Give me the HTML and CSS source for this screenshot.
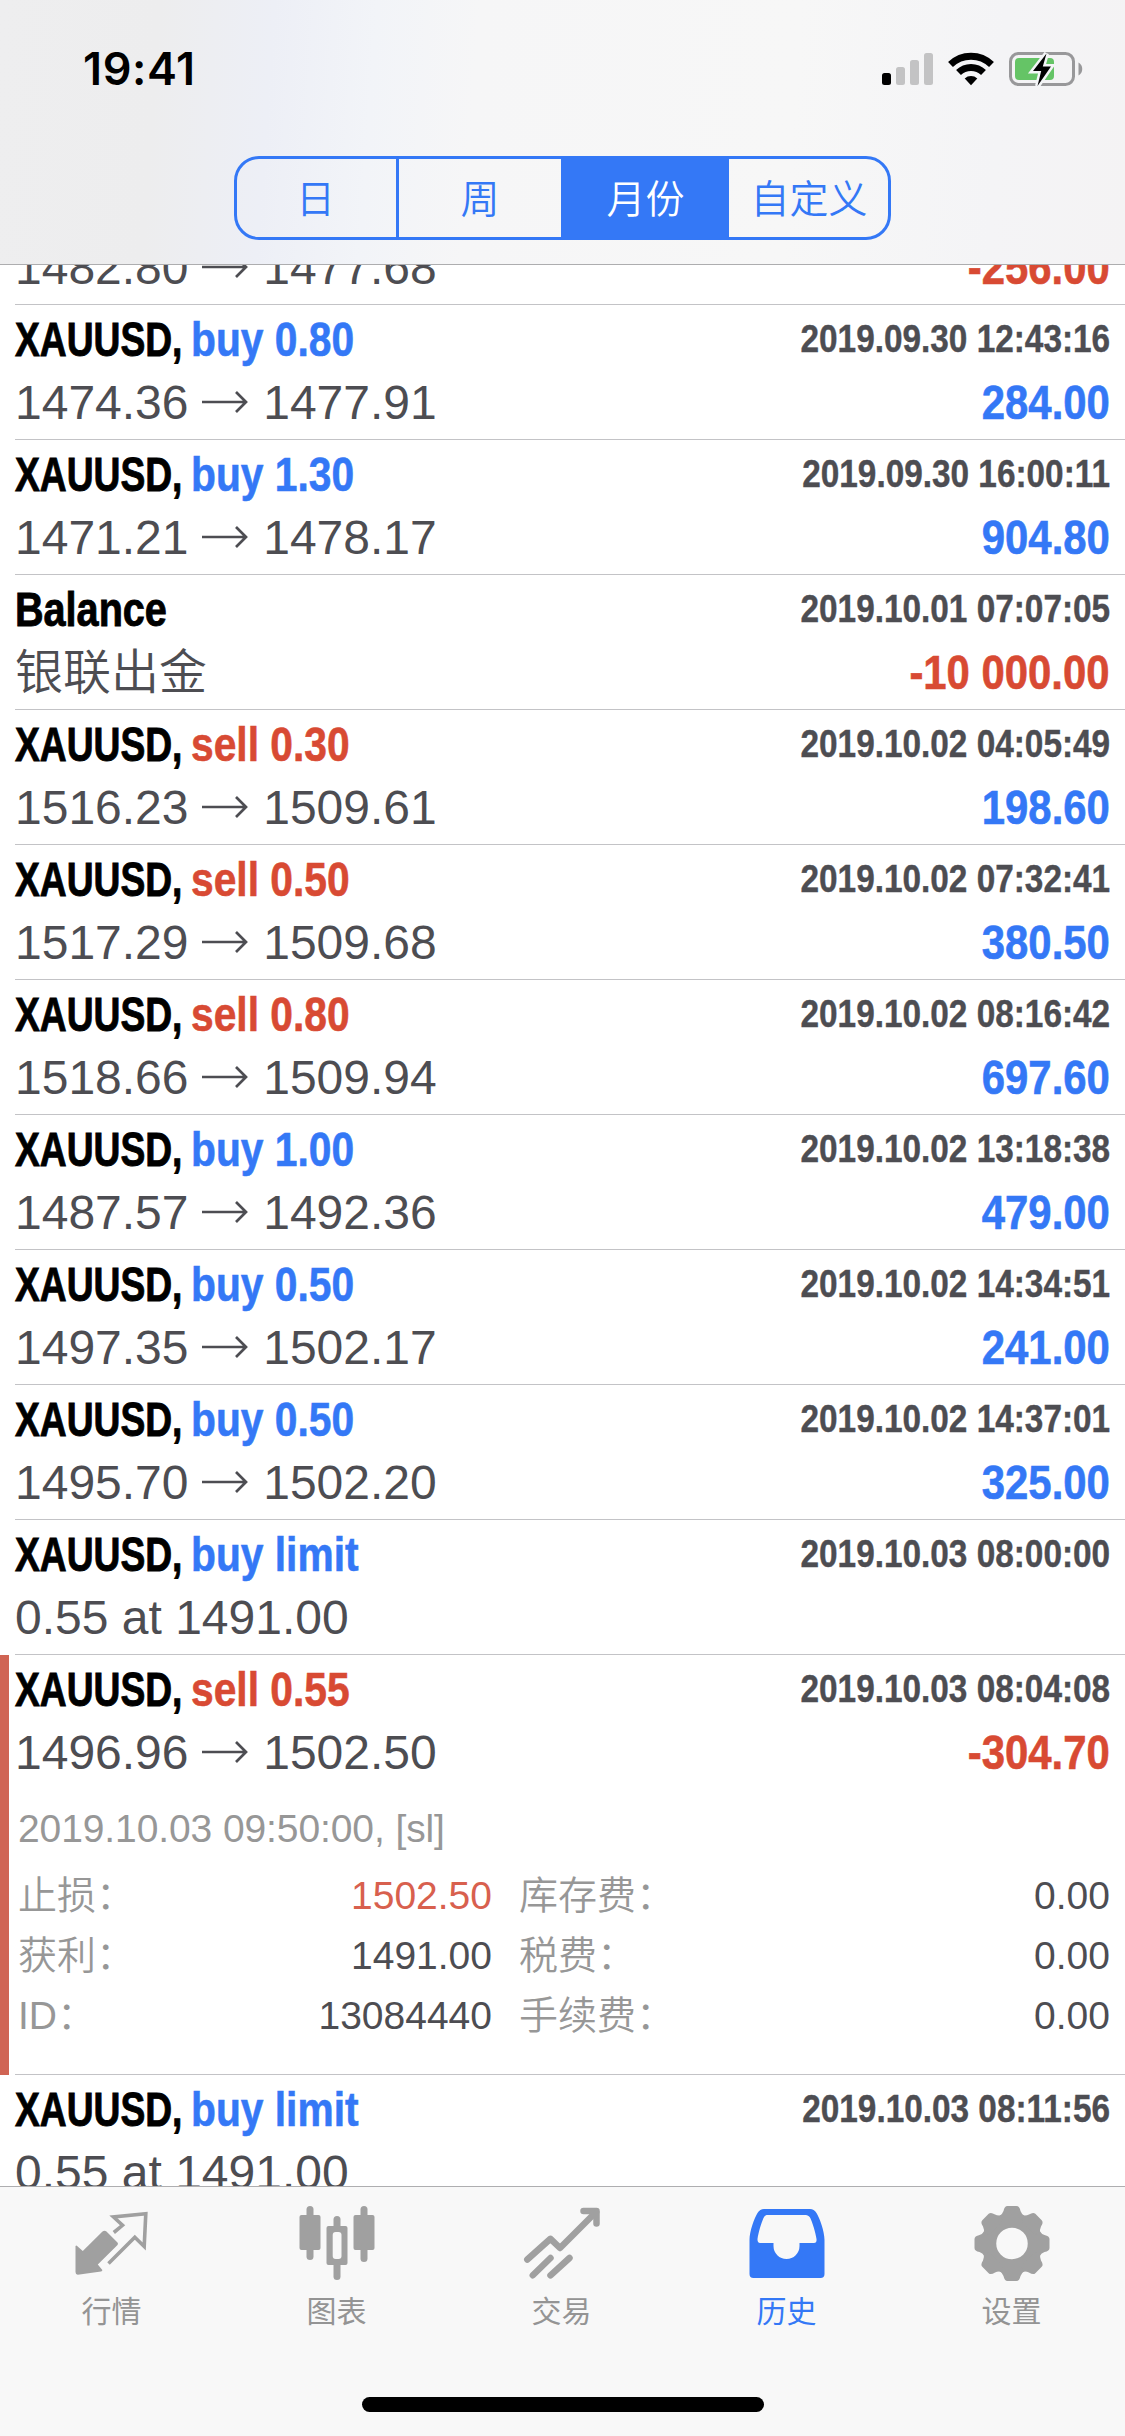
FILE: index.html
```html
<!DOCTYPE html>
<html lang="zh-CN">
<head>
<meta charset="utf-8">
<title>历史</title>
<link rel="stylesheet" href="styles.css">
</head>
<body>
<div class="screen">
  <header class="header">
    <div class="status">
      <span class="clock">19:41</span>
      <svg class="status-icons" width="202" height="38" viewBox="882 50 202 38">
        <rect x="882" y="73" width="9" height="12" rx="2.5"/>
        <g fill="#c3c3c4"><rect x="896" y="67" width="9" height="18" rx="2.5"/><rect x="910" y="60" width="9" height="25" rx="2.5"/><rect x="924" y="53" width="9" height="32" rx="2.5"/></g>
        <g fill="none" stroke="#000" stroke-width="7"><path d="M950.5 64.5a29.5 29.5 0 0 1 41 0"/><path d="M958.5 72.5a18 18 0 0 1 25 0"/></g>
        <path d="M971 85.2l-6.3-6.6a9.2 9.2 0 0 1 12.6 0z"/>
        <rect x="1010.5" y="53.5" width="63" height="31" rx="8" fill="none" stroke="#98989a" stroke-width="3"/>
        <path d="M1078.500 62.500c5 2.500 5 10.500 0 13z" fill="#98989a"/>
        <rect x="1015" y="58" width="39" height="22" rx="4" fill="#65c466"/>
        <path d="M1046.500 53.500L1033 71h8.200L1037.500 86 1051 66.500h-8.200z" stroke="#f4f5f7" stroke-width="5" stroke-linejoin="miter"/>
        <path d="M1046.500 53.500L1033 71h8.200L1037.500 86 1051 66.500h-8.200z"/>
      </svg>
    </div>
    <nav class="segments">
      <span class="segment">日</span><span class="segment">周</span><span class="segment selected">月份</span><span class="segment">自定义</span>
    </nav>
  </header>

  <main class="viewport">
    <div class="list">
      <div class="row"><span class="title"><b>XAUUSD,</b><em class="buy">buy 0.80</em></span><span class="time">2019.09.30 12:40:02</span><span class="price">1482.80 <svg class="arrow" viewBox="0 0 48 24"><path d="M0 12H44M34 2l10 10-10 10"/></svg> 1477.68</span><span class="profit loss">-256.00</span></div>
      <div class="row"><span class="title"><b>XAUUSD,</b><em class="buy">buy 0.80</em></span><span class="time">2019.09.30 12:43:16</span><span class="price">1474.36 <svg class="arrow" viewBox="0 0 48 24"><path d="M0 12H44M34 2l10 10-10 10"/></svg> 1477.91</span><span class="profit">284.00</span></div>
      <div class="row"><span class="title"><b>XAUUSD,</b><em class="buy">buy 1.30</em></span><span class="time">2019.09.30 16:00:11</span><span class="price">1471.21 <svg class="arrow" viewBox="0 0 48 24"><path d="M0 12H44M34 2l10 10-10 10"/></svg> 1478.17</span><span class="profit">904.80</span></div>
      <div class="row"><span class="title"><b class="word">Balance</b></span><span class="time">2019.10.01 07:07:05</span><span class="price">银联出金</span><span class="profit loss">-10 000.00</span></div>
      <div class="row"><span class="title"><b>XAUUSD,</b><em class="sell">sell 0.30</em></span><span class="time">2019.10.02 04:05:49</span><span class="price">1516.23 <svg class="arrow" viewBox="0 0 48 24"><path d="M0 12H44M34 2l10 10-10 10"/></svg> 1509.61</span><span class="profit">198.60</span></div>
      <div class="row"><span class="title"><b>XAUUSD,</b><em class="sell">sell 0.50</em></span><span class="time">2019.10.02 07:32:41</span><span class="price">1517.29 <svg class="arrow" viewBox="0 0 48 24"><path d="M0 12H44M34 2l10 10-10 10"/></svg> 1509.68</span><span class="profit">380.50</span></div>
      <div class="row"><span class="title"><b>XAUUSD,</b><em class="sell">sell 0.80</em></span><span class="time">2019.10.02 08:16:42</span><span class="price">1518.66 <svg class="arrow" viewBox="0 0 48 24"><path d="M0 12H44M34 2l10 10-10 10"/></svg> 1509.94</span><span class="profit">697.60</span></div>
      <div class="row"><span class="title"><b>XAUUSD,</b><em class="buy">buy 1.00</em></span><span class="time">2019.10.02 13:18:38</span><span class="price">1487.57 <svg class="arrow" viewBox="0 0 48 24"><path d="M0 12H44M34 2l10 10-10 10"/></svg> 1492.36</span><span class="profit">479.00</span></div>
      <div class="row"><span class="title"><b>XAUUSD,</b><em class="buy">buy 0.50</em></span><span class="time">2019.10.02 14:34:51</span><span class="price">1497.35 <svg class="arrow" viewBox="0 0 48 24"><path d="M0 12H44M34 2l10 10-10 10"/></svg> 1502.17</span><span class="profit">241.00</span></div>
      <div class="row"><span class="title"><b>XAUUSD,</b><em class="buy">buy 0.50</em></span><span class="time">2019.10.02 14:37:01</span><span class="price">1495.70 <svg class="arrow" viewBox="0 0 48 24"><path d="M0 12H44M34 2l10 10-10 10"/></svg> 1502.20</span><span class="profit">325.00</span></div>
      <div class="row"><span class="title"><b>XAUUSD,</b><em class="buy">buy limit</em></span><span class="time">2019.10.03 08:00:00</span><span class="price">0.55 at 1491.00</span></div>
      <section class="expanded">
        <div class="row"><span class="title"><b>XAUUSD,</b><em class="sell">sell 0.55</em></span><span class="time">2019.10.03 08:04:08</span><span class="price">1496.96 <svg class="arrow" viewBox="0 0 48 24"><path d="M0 12H44M34 2l10 10-10 10"/></svg> 1502.50</span><span class="profit loss">-304.70</span>
          <div class="details">
            <p class="closed">2019.10.03 09:50:00, [sl]</p>
            <dl class="facts">
              <dt>止损<i>：</i></dt><dd class="hit">1502.50</dd><dt>库存费<i>：</i></dt><dd>0.00</dd>
              <dt>获利<i>：</i></dt><dd>1491.00</dd><dt>税费<i>：</i></dt><dd>0.00</dd>
              <dt>ID<i>：</i></dt><dd>13084440</dd><dt>手续费<i>：</i></dt><dd>0.00</dd>
            </dl>
          </div>
        </div>
      </section>
      <div class="row"><span class="title"><b>XAUUSD,</b><em class="buy">buy limit</em></span><span class="time">2019.10.03 08:11:56</span><span class="price">0.55 at 1491.00</span></div>
    </div>
  </main>

  <footer class="footer">
    <nav class="tabs">
      <a class="tab"><svg viewBox="0 0 80 80"><path d="M3.500 42.500L9.800 48 29.500 28.500Q31.500 26.800 33.500 28.500L44.500 39.500Q45.500 40.800 44.500 42L24.800 61.500 29.300 67Q29.500 68.200 28 68.500L4.800 71.700Q2.500 71.500 2.500 69V43z"/><path class="line thin" d="M40.800 29.500L49.500 22.300 40.500 14 72.800 10.700 71.200 43.500 61.800 34.300 35.500 60.500"/></svg><span>行情</span></a>
      <a class="tab"><svg viewBox="0 0 80 80"><rect x="8.500" y="3" width="7" height="54" rx="3.500"/><rect x="1.500" y="12" width="21" height="35" rx="2"/><rect x="35.500" y="13" width="7" height="64" rx="3.500"/><rect x="28.500" y="23" width="21" height="39" rx="2"/><rect x="34.700" y="29" width="8.800" height="27" rx="3" fill="#f8f8f8"/><rect x="62.500" y="3" width="7" height="56" rx="3.500"/><rect x="55.500" y="12" width="21" height="35" rx="2"/></svg><span>图表</span></a>
      <a class="tab"><svg viewBox="0 0 80 80"><g class="line"><path d="M4.300 56.500L27.500 35.800 37 45 73 9"/><path d="M60.500 8H73.500V20.500"/><path d="M9.800 72.300L27.500 55" /><path d="M27.500 72.300L46.500 55"/></g></svg><span>交易</span></a>
      <a class="tab active"><svg viewBox="0 0 80 80"><path fill-rule="evenodd" d="M1.500 37C1.500 28 6.500 15 9.500 10Q12 6 16 6H62Q66 6 68.500 10C71.500 15 76.500 28 76.500 37V71Q76.500 75 72.500 75H5.500Q1.500 75 1.500 71zM18.500 12Q16.500 12.500 15.500 15C13.500 19.500 10.500 29 9.500 36Q9.300 40 12 40H25.500V43A13 13 0 0 0 51.500 43V40H66Q69 40 68.500 36C67.500 29 64 18.500 62.500 15.500Q61.500 12.500 58 12z"/></svg><span>历史</span></a>
      <a class="tab"><svg viewBox="0 0 80 80"><circle cx="39" cy="40.500" r="23" fill="none" stroke="#a0a0a0" stroke-width="14.500"/><path id="tooth" d="M26.500 13Q29.500 11 30.500 8 31.500 3 34.500 3H43.500Q46.500 3 47.500 8 48.500 11 51.500 13L47 18H31z"/><use href="#tooth" transform="rotate(45 39 40.500)"/><use href="#tooth" transform="rotate(90 39 40.500)"/><use href="#tooth" transform="rotate(135 39 40.500)"/><use href="#tooth" transform="rotate(180 39 40.500)"/><use href="#tooth" transform="rotate(225 39 40.500)"/><use href="#tooth" transform="rotate(270 39 40.500)"/><use href="#tooth" transform="rotate(315 39 40.500)"/></svg><span>设置</span></a>
    </nav>
    <div class="home-bar"></div>
  </footer>
</div>
</body>
</html>
```
FILE: styles.css
```css
* { box-sizing: border-box; margin: 0; padding: 0; }

body {
  background: #fff;
  font-family: "Liberation Sans", "Noto Sans CJK SC", sans-serif;
  color: #4d4d52;
}

.screen {
  width: 1125px;
  height: 2436px;
  display: flex;
  flex-direction: column;
  overflow: hidden;
}

/* Header */
.header {
  flex: none;
  height: 265px;
  border-bottom: 1px solid #adadaf;
  background: linear-gradient(94deg, #eeeeef 0, #ededee 14%, #edeff6 24%, #f2f4f8 33%, #f6f6f7 42%, #f7f7f7 70%, #f4f4f6 88%, #f4f3f4 100%);
}
.status {
  height: 156px;
  display: flex;
  justify-content: space-between;
  padding: 50px 41px 0 83px;
}
.clock {
  font: 600 45px/38px Inter, sans-serif;
  color: #000;
  letter-spacing: 0.6px;
}
.segments {
  width: 657px;
  height: 84px;
  margin-left: 234px;
  display: grid;
  grid-template-columns: 159px 165px 168px 159px;
  border: 3px solid #3478f6;
  border-radius: 25px;
  overflow: hidden;
}
.segment {
  display: flex;
  align-items: center;
  justify-content: center;
  font: 350 39px/74px "Noto Sans CJK SC", sans-serif;
  color: #3478f6;
  border-left: 3px solid #3478f6;
  padding-bottom: 4px;
}
.segment:first-child { border-left: 0; padding-right: 2px; }
.segment.selected { background: #3478f6; color: #fff; padding-right: 2px; }
.segment:last-child { border-left: 0; padding-left: 1px; }

/* History list */
.viewport {
  height: 1921px;
  overflow: hidden;
}
.list { margin-top: -95px; }
.row {
  display: grid;
  grid-template-columns: 1fr auto;
  grid-template-rows: 60px 60px;
  row-gap: 3px;
  min-height: 135px;
  margin-left: 15px;
  padding: 5px 15px 0 0;
  border-bottom: 1px solid #c3c3c6;
  line-height: 60px;
  white-space: nowrap;
}

/* Condensed bold text */
.title b, .title em, .time, .profit {
  font-weight: 700;
  font-style: normal;
  transform-origin: left;
  -webkit-text-stroke: 0.6px currentColor;
}
.title { font-size: 48px; display: flex; }
.title b {
  width: 176px;
  color: #000;
  transform: scaleX(0.775);
  -webkit-text-stroke-width: 0.9px;
}
.title .word { transform: scaleX(0.825); }
.title em { transform: scaleX(0.849); }
.buy { color: #3478f6; }
.sell { color: #d84a33; }
.time, .profit { justify-self: end; transform-origin: right; }
.time {
  font-size: 39px;
  line-height: 58px;
  transform: scaleX(0.855);
  -webkit-text-stroke-width: 0.4px;
}
.price { font-size: 48px; font-weight: 350; }
.profit { font-size: 48px; color: #3478f6; transform: scaleX(0.872); }
.profit.loss { color: #d84a33; }
.arrow {
  width: 48px;
  height: 24px;
  vertical-align: 5px;
  fill: none;
  stroke: #4d4d52;
  stroke-width: 2.7;
}

/* Expanded deal */
.expanded { border-left: 9px solid #d06454; }
.expanded .row { margin-left: 6px; height: 420px; grid-template-rows: 60px 60px 1fr; }
.details {
  grid-column: 1 / 3;
  padding: 13px 0 0 3px;
  font-size: 39px;
  font-weight: 350;
}
.closed { color: #979797; line-height: 60px; letter-spacing: -0.1px; }
.facts {
  display: grid;
  grid-template-columns: 200px 274px 200px 1fr;
  grid-auto-rows: 60px;
  margin-top: 7px;
}
.facts dt { color: #979797; }
.facts i { font-style: normal; }
.facts dd { text-align: right; }
.facts dt:nth-of-type(even) { padding-left: 27px; }
.facts .hit { color: #d8604e; }

/* Tab bar */
.footer {
  flex: 1;
  background: #f8f8f8;
  border-top: 1px solid #aeaeb0;
  display: flex;
  flex-direction: column;
  align-items: center;
}
.tabs {
  width: 1125px;
  height: 210px;
  display: grid;
  grid-template-columns: repeat(5, 1fr);
}
.tab {
  display: flex;
  flex-direction: column;
  align-items: center;
  padding-top: 16px;
  font: 400 30px/40px "Noto Sans CJK SC", sans-serif;
  color: #949494;
}
.tab svg { width: 80px; height: 80px; margin-bottom: 6px; fill: #a0a0a0; }
.tab.active { color: #3478f6; }
.tab.active svg { fill: #3478f6; }
.tab span { padding-right: 2px; }
.line { fill: none; stroke: #a0a0a0; stroke-width: 6.500; stroke-linecap: round; stroke-linejoin: round; }
.line.thin { stroke-width: 3.600; stroke-linecap: butt; stroke-linejoin: miter; }
.home-bar { width: 402px; height: 15px; border-radius: 8px; background: #000; }
```
